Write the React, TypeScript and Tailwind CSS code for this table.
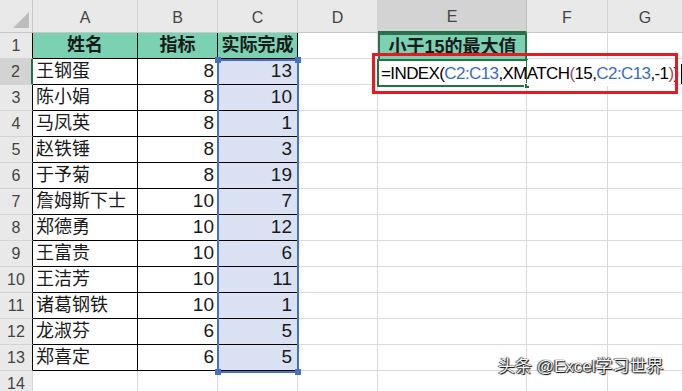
import React from "react";

const cols = ["A", "B", "C", "D", "E", "F", "G"];

const rows: [string, number, number][] = [
  ["王钢蛋", 8, 13],
  ["陈小娟", 8, 10],
  ["马凤英", 8, 1],
  ["赵铁锤", 8, 3],
  ["于予菊", 8, 19],
  ["詹姆斯下士", 10, 7],
  ["郑德勇", 10, 12],
  ["王富贵", 10, 6],
  ["王洁芳", 10, 11],
  ["诸葛钢铁", 10, 1],
  ["龙淑芬", 6, 5],
  ["郑喜定", 6, 5],
];

const grid = "border-r border-b border-[#d9d9d9]";
const ink = "border-r border-b border-black whitespace-nowrap overflow-hidden";

function Handle({ className }: { className: string }) {
  return <div className={"absolute w-[6px] h-[6px] bg-[#4472c4] " + className} />;
}

export default function App() {
  return (
    <div className="relative w-[683px] h-[391px] overflow-hidden bg-white font-['Liberation_Sans','Noto_Sans_CJK_SC',sans-serif] text-[#1a1a1a]">
      <div className="grid grid-cols-[33px_105px_80px_80px_80px_149px_81px_75px] grid-rows-[33px_repeat(14,26px)]">
        {/* corner */}
        <div className="relative bg-[#e9e9e9] border-r border-b border-[#c8c8c8]">
          <div className="absolute left-[13px] top-[12px] w-0 h-0 border-l-[16px] border-l-transparent border-b-[16px] border-b-[#bdbdbd]" />
        </div>
        {cols.map((c) => (
          <div
            key={c}
            className={
              "flex items-end justify-center pb-[2px] text-[16px] text-[#444] " +
              (c === "E"
                ? "bg-[#d3d3d3] border-r border-[#bdbdbd] border-b-2 border-b-[#217346]"
                : "bg-[#e9e9e9] border-r border-r-[#d4d4d4] border-b border-b-[#c8c8c8]")
            }
          >
            {c}
          </div>
        ))}

        {/* row 1: headings */}
        <div className="flex items-center justify-center bg-[#e9e9e9] text-[16px] text-[#444] border-b border-b-[#d4d4d4] border-r border-r-black">1</div>
        <div className={"flex items-center justify-center bg-[#7bd2b2] font-bold text-[18px] " + ink}>姓名</div>
        <div className={"flex items-center justify-center bg-[#7bd2b2] font-bold text-[18px] " + ink}>指标</div>
        <div className={"flex items-center justify-center bg-[#7bd2b2] font-bold text-[18px] " + ink}>实际完成</div>
        <div className={grid} />
        <div className="flex items-center justify-center bg-[#7bd2b2] font-bold text-[18px] whitespace-nowrap border-2 border-b-0 border-[#2f6e4f]">小于15的最大值</div>
        <div className={grid} />
        <div className={grid} />

        {rows.map(([name, target, done], i) => {
          const n = i + 2;
          const active = n === 2;
          return (
            <React.Fragment key={n}>
              <div
                className={
                  "flex items-center justify-center text-[16px] text-[#444] border-b border-b-[#d4d4d4] " +
                  (active
                    ? "bg-[#d3d3d3] border-r-2 border-r-[#217346]"
                    : "bg-[#e9e9e9] border-r border-r-black")
                }
              >
                {n}
              </div>
              <div className={"flex items-center pl-[3px] text-[18px] " + ink}>{name}</div>
              <div className={"flex items-center justify-end pr-[3px] text-[19px] " + ink}>{target}</div>
              <div className={"flex items-center justify-end pr-[5px] text-[19px] bg-[#d9e1f2] " + ink}>{done}</div>
              <div className={grid} />
              <div className={grid} />
              <div className={grid} />
              <div className={grid} />
            </React.Fragment>
          );
        })}

        {/* row 14 */}
        <div className="flex items-center justify-center bg-[#e9e9e9] text-[16px] text-[#444] border-r border-b border-[#d4d4d4]">14</div>
        {cols.map((c) => (
          <div key={c} className={grid} />
        ))}
      </div>

      {/* selection around C2:C13 */}
      <div className="absolute left-[217px] top-[59px] w-[82px] h-[314px] border-2 border-[#4472c4]">
        <Handle className="-left-[4px] -top-[4px]" />
        <Handle className="-right-[4px] -top-[4px]" />
        <Handle className="-left-[4px] -bottom-[4px]" />
        <Handle className="-right-[4px] -bottom-[4px]" />
      </div>

      {/* cell being edited: E2 with the formula spilling right */}
      <div className="absolute left-[377px] top-[59px] w-[151px] h-[28px] border-2 border-[#217346] bg-white">
        <div className="absolute -right-[4px] -bottom-[4px] w-[6px] h-[6px] bg-[#217346] border border-white" />
      </div>
      <div className="absolute left-[527px] top-[60px] w-[145px] h-[26px] bg-white" />
      <div className="absolute left-[381px] top-[60px] h-[27px] flex items-center text-[17px] tracking-[-0.6px] whitespace-nowrap text-black">
        <span>=INDEX(</span>
        <span className="text-[#3a6cc1]">C2:C13</span>
        <span>,XMATCH</span>
        <span className="text-[#a24d4d]">(</span>
        <span>15,</span>
        <span className="text-[#3a6cc1]">C2:C13</span>
        <span>,-1</span>
        <span className="text-[#a24d4d]">)</span>
        <span>)</span>
        <span className="ml-[2px] w-[1px] h-[20px] bg-black" />
      </div>

      {/* highlight box */}
      <div className="absolute left-[372px] top-[53px] w-[306px] h-[41px] border-[3px] border-[#e31b23]" />

      {/* watermark */}
      <div className="absolute left-[498px] top-[354px] text-[17px] text-[#f4f4f4] [text-shadow:1px_1px_1px_#000,-1px_0_1px_#333,0_0_1px_#000]">
        头条 @Excel学习世界
      </div>
    </div>
  );
}
